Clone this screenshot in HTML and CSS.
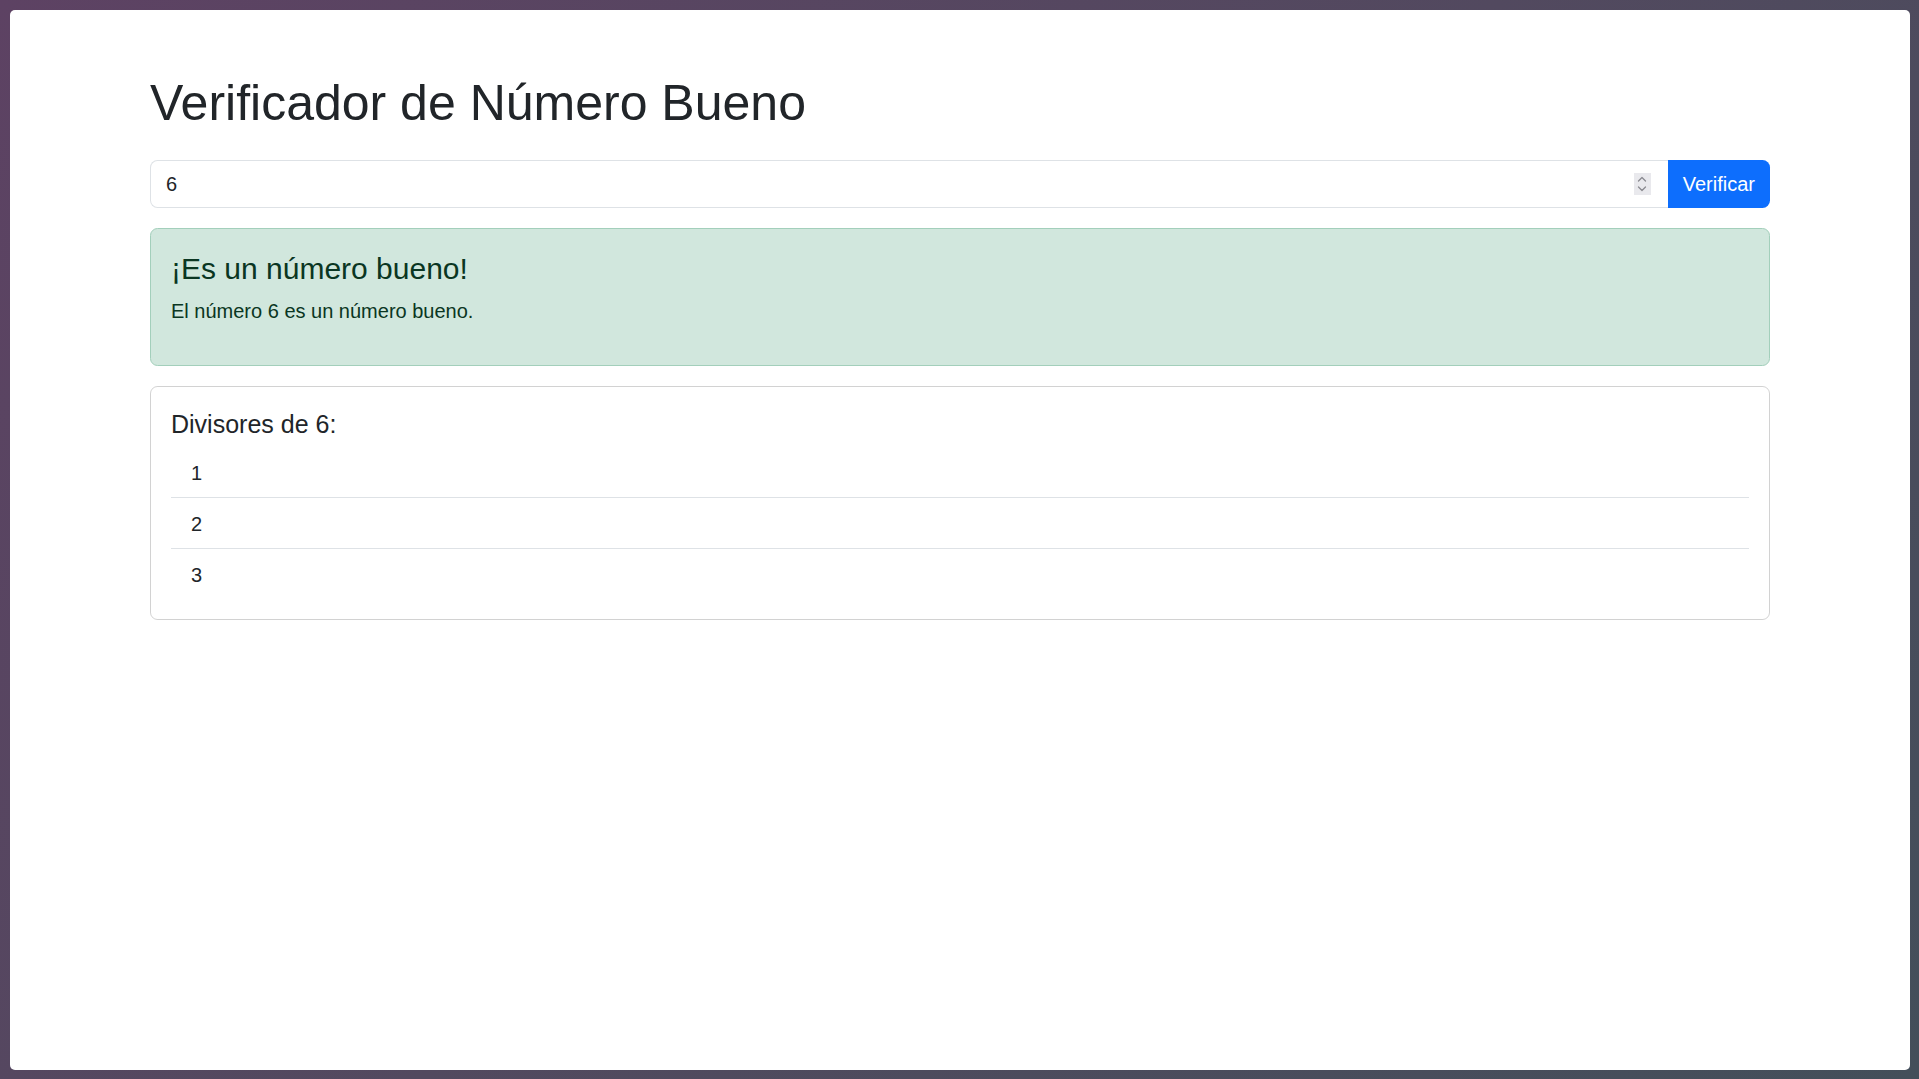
FILE: index.html
```html
<!DOCTYPE html>
<html lang="es">
<head>
<meta charset="utf-8">
<title>Verificador de Número Bueno</title>
<link rel="stylesheet" href="styles.css">
</head>
<body>
<div class="window">
  <main class="container">
    <h1 class="title">Verificador de Número Bueno</h1>
    <form class="input-group" onsubmit="return false">
      <div class="field">
        <input class="field-input" type="text" value="6" aria-label="Número">
        <span class="spin" aria-hidden="true">
          <svg width="10" height="18" viewBox="0 0 10 18"><path d="M1.5 6 L5 2.5 L8.5 6 M1.5 12 L5 15.5 L8.5 12" fill="none" stroke="#8a8a90" stroke-width="1.3" stroke-linecap="round" stroke-linejoin="round"/></svg>
        </span>
      </div>
      <button class="btn" type="submit">Verificar</button>
    </form>
    <section class="alert">
      <h4 class="alert-heading">¡Es un número bueno!</h4>
      <p class="alert-text">El número 6 es un número bueno.</p>
    </section>
    <section class="card">
      <h5 class="card-title">Divisores de 6:</h5>
      <ul class="list">
        <li class="list-item">1</li>
        <li class="list-item">2</li>
        <li class="list-item">3</li>
      </ul>
    </section>
  </main>
</div>
</body>
</html>
```
FILE: styles.css
```css
* { box-sizing: border-box; }
html, body { height: 100%; }
body {
  margin: 0;
  padding: 10px 9px 9px 10px;
  background: linear-gradient(135deg, #5d4263 0%, #52495f 50%, #434f5a 100%);
  font-family: "Liberation Sans", "Noto Sans", sans-serif;
  color: #212529;
  overflow: hidden;
}
.window {
  width: 1900px;
  height: 1060px;
  background: #fff;
  border-radius: 5px;
  padding-top: 60px;
}
.container {
  width: 1650px;
  margin: 0 auto;
  padding: 0 15px;
}
.title {
  font-size: 50px;
  line-height: 1.2;
  font-weight: 400;
  padding-top: 3px;
  margin: 0 0 27px;
}
.input-group {
  display: flex;
  margin: 0 0 20px;
}
.field {
  flex: 1;
  display: flex;
  align-items: center;
  height: 47.5px;
  border: 1px solid #dee2e6;
  border-right: 0;
  border-radius: 7.5px 0 0 7.5px;
  padding: 1px 17px 0 15px;
}
.field-input {
  flex: 1;
  border: 0;
  outline: 0;
  padding: 0;
  font: inherit;
  font-size: 20px;
  color: #212529;
  background: transparent;
}
.spin {
  width: 17px;
  height: 22px;
  background: #e9e9ed;
  display: flex;
  align-items: center;
  justify-content: center;
}
.btn {
  height: 47.5px;
  padding: 1px 15px 0;
  border: 0;
  border-radius: 0 7.5px 7.5px 0;
  background: #0d6efd;
  color: #fff;
  font: inherit;
  font-size: 20px;
}
.alert {
  background: #d1e7dd;
  border: 1px solid #a3cfbb;
  border-radius: 7.5px;
  color: #0a3622;
  padding: 20px;
  margin-bottom: 20px;
}
.alert-heading {
  font-size: 30px;
  line-height: 1.2;
  font-weight: 400;
  padding-top: 2px;
  margin: 0 0 8px;
}
.alert-text {
  font-size: 20px;
  line-height: 30px;
  padding-top: 1px;
  margin: 0 0 19px;
}
.card {
  border: 1px solid rgba(0,0,0,.175);
  border-radius: 7.5px;
  padding: 20px;
}
.card-title {
  font-size: 25px;
  line-height: 1.2;
  font-weight: 400;
  padding-top: 2px;
  margin: 0 0 8px;
}
.list {
  list-style: none;
  margin: 0;
  padding: 0;
}
.list-item {
  font-size: 20px;
  line-height: 30px;
  padding: 11px 20px 9px;
  border-bottom: 1px solid #dee2e6;
}
.list-item:last-child { border-bottom: 0; }
```
